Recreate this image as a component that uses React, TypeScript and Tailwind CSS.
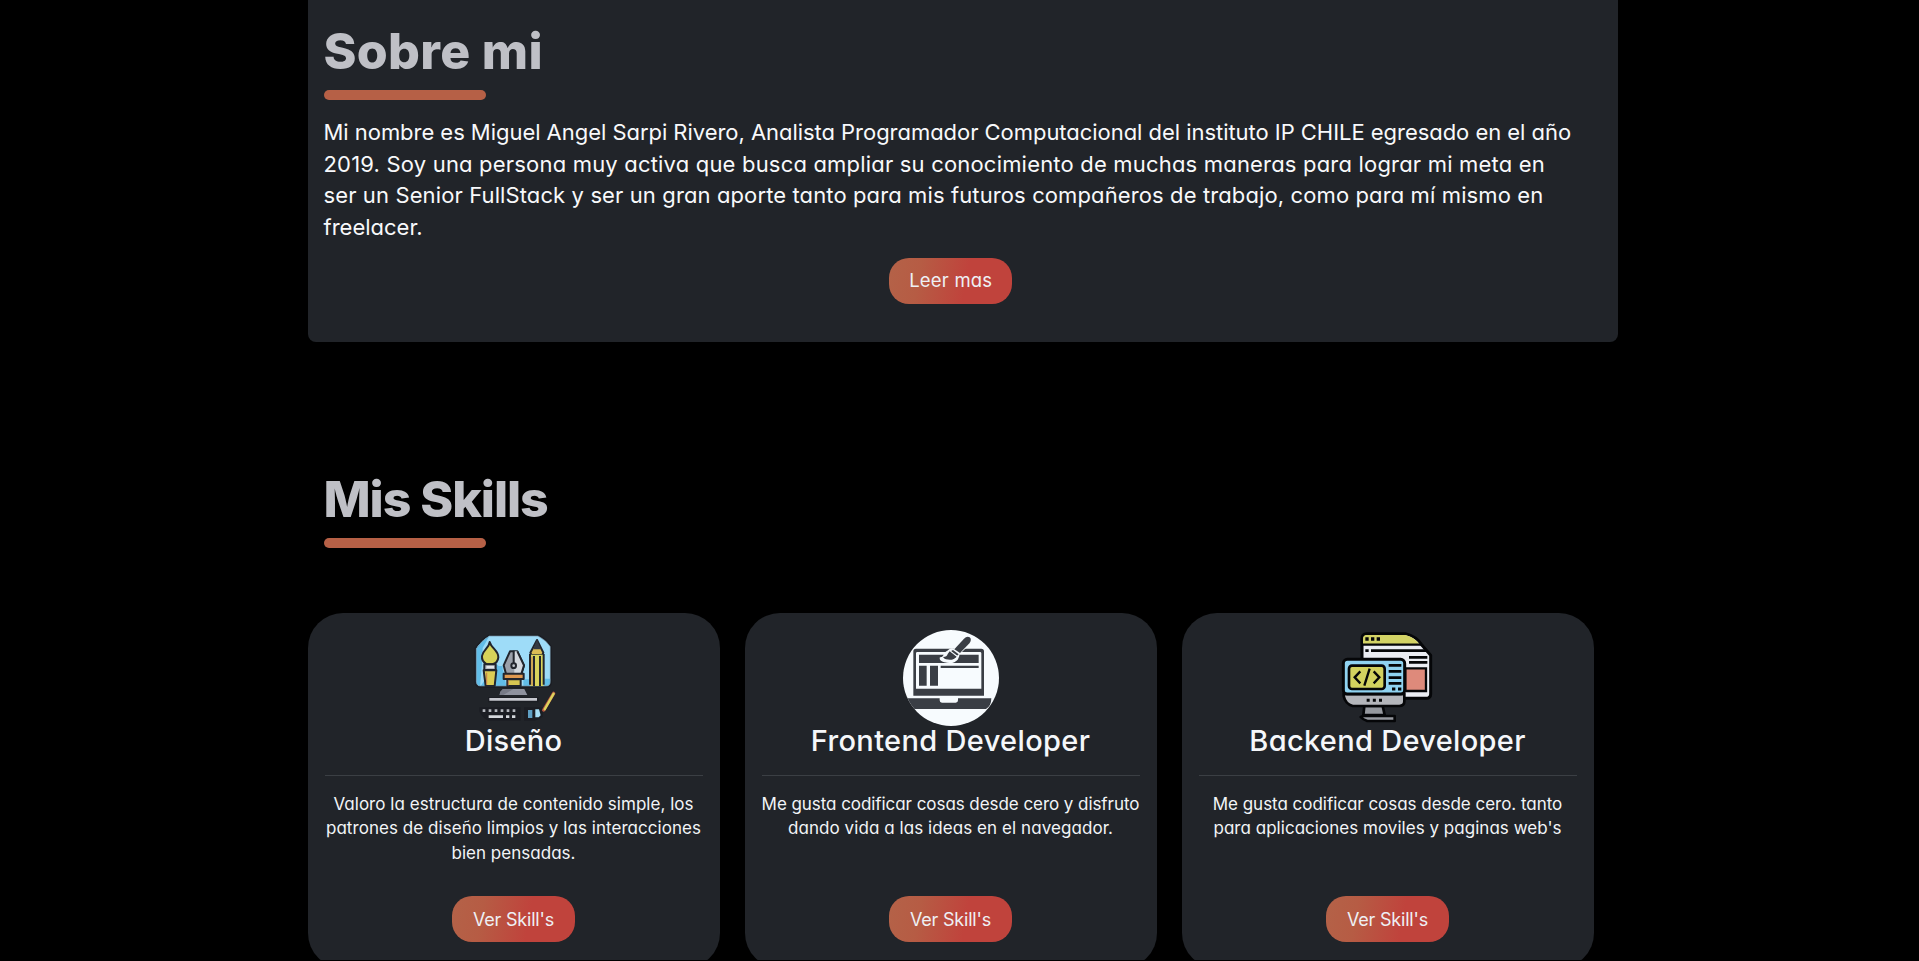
import type { ReactNode } from "react";

type Line = { text: string; tracking: string };

function Lines({ lines }: { lines: Line[] }) {
  return (
    <>
      {lines.map((l) => (
        <span key={l.text} className={`block whitespace-nowrap ${l.tracking}`}>
          {l.text}
        </span>
      ))}
    </>
  );
}

function Title({ text, tracking }: { text: string; tracking: string }) {
  return (
    <div>
      <h2 className={`text-[50px] leading-[60px] font-extrabold text-[#bfc0c6] ${tracking}`}>{text}</h2>
      <div className="mt-[9px] h-[10px] w-[162px] rounded-[5px] bg-[#b66046]" />
    </div>
  );
}

function Pill({ label, tracking }: { label: string; tracking: string }) {
  return (
    <button
      className={`h-[46px] w-[123px] rounded-[20px] bg-linear-[100deg,#b46248_0%,#b65c44_25%,#c0433c_62%,#c0433c_100%] whitespace-nowrap text-[#eef0f4] ${tracking}`}
    >
      {label}
    </button>
  );
}

function DesignIcon() {
  return (
    <svg viewBox="18 30 288 288" className="size-24">
      <defs>
        <clipPath id="design-screen">
          <path d="M88 48H234Q258 60 271 80V184Q271 198 258 198H62Q49 198 49 184V86Q64 62 88 48Z" />
        </clipPath>
      </defs>
      <path d="M86 44H238Q262 56 276 80V186Q276 203 258 203H60Q44 203 44 186V84Q60 58 86 44Z" fill="#1b1d23" />
      <g clipPath="url(#design-screen)">
        <rect x="45" y="44" width="230" height="158" fill="#9edcf8" />
        <path d="M45 44H96L50 90L68 150L112 134L130 152L140 202H45Z" fill="#62bde8" />
        <path d="M88 48L128 48L112 80L118 110L60 202H45V84Z" fill="#9edcf8" />
        <path d="M45 84L88 48L68 84L66 130L60 202H45Z" fill="#62bde8" />
        <path d="M112 138H128V202H100ZM190 178H212V202H190ZM254 176H275V202H250Z" fill="#62bde8" />
      </g>
      <path
        d="M88 48H234Q258 60 271 80V184Q271 198 258 198H62Q49 198 49 184V86Q64 62 88 48Z"
        fill="none"
        stroke="#6f8c9e"
        strokeWidth="2"
      />
      <g stroke="#22252d" strokeWidth="6" strokeLinejoin="round">
        <path d="M89 66C93 84 116 92 115 112C114 124 104 131 97 133H80C70 127 65 118 66 108C68 90 87 86 89 66Z" fill="#d6d35a" />
        <path d="M73 133H107V150H73Z" fill="#b9bdc4" />
        <path d="M71 151H109L104 198H77Z" fill="#dccc55" />
        <path d="M150 94H172L192 136L184 162H138L131 136Z" fill="#9ba0aa" />
        <path d="M163 94H172L192 136L184 162H163Z" fill="#d3d7dd" stroke="none" />
        <path d="M172 94L192 136L184 162" fill="none" />
        <path d="M131 161H191V177H131Z" fill="#df9850" />
        <path d="M142 178H182V198H142Z" fill="#d7c652" />
        <path d="M231 60L250 98L247 105H214L211 98Z" fill="#dcbc55" />
        <path d="M211 104H250V198H211Z" fill="#d9d45c" stroke="none" />
        <path d="M210 102V194M222 108V198M240 108V198M251 102V194" fill="none" />
      </g>
      <path d="M231 58L242 88H220Z" fill="#353942" />
      <path d="M80 158V194M216 110V196M145 181V196" stroke="#c47b4b" strokeWidth="3" />
      <path d="M161 92V130" stroke="#22252d" strokeWidth="6" />
      <circle cx="161" cy="137" r="7" fill="#c0c4cb" stroke="#22252d" strokeWidth="6" />
      <path d="M80 141H102" stroke="#eceef2" strokeWidth="5" />
      <path d="M129 207H193L202 225H119Q120 213 129 207Z" fill="#8f929e" />
      <path d="M129 207H160L130 225H119Q120 213 129 207Z" fill="#777a86" />
      <path d="M84 231H236V247H84ZM58 262H182V302H84Q66 292 58 274ZM192 262H248V290Q236 300 224 302H192Z" fill="#1b1d23" />
      <path d="M88 238H231" stroke="#c6c7ce" strokeWidth="8" />
      <path d="M68 272H166" stroke="#b4b7bd" strokeWidth="8" strokeDasharray="8 10" />
      <path d="M86 290H129M138 290H148M156 290H166" stroke="#d4d7dc" strokeWidth="8" />
      <path d="M204 270H217V294H204Z" fill="#5e9fc4" />
      <path d="M226 268H237L242 286L236 292H226Z" fill="#a7def6" />
      <path d="M251 270L281 220" stroke="#b4553f" strokeWidth="10" strokeLinecap="round" />
      <path d="M254 268L281 221" stroke="#dcd45c" strokeWidth="7" strokeLinecap="round" />
    </svg>
  );
}

function FrontendIcon() {
  return (
    <svg viewBox="39 30 288 288" className="size-24">
      <defs>
        <clipPath id="frontend-disc">
          <circle cx="183" cy="174" r="144" />
        </clipPath>
      </defs>
      <circle cx="183" cy="174" r="144" fill="#f7fbfe" />
      <g clipPath="url(#frontend-disc)" fill="#3a3e45">
        <path fillRule="evenodd" d="M78 86H274Q282 86 282 94V227H70V94Q70 86 78 86ZM82 96Q78 96 78 100V206H274V100Q274 96 270 96Z" />
        <path d="M87 104H266V129H87Z" />
        <path d="M87 137H110V197H87ZM120 137H144V197H120Z" />
        <path d="M152 137H266V144H152Z" />
        <path d="M30 235H149V241Q149 248 156 248H197Q204 248 204 241V235H304Q304 258 288 267H30Z" />
        <path
          d="M164 100L175 92Q184 84 192 89L222 56Q236 46 243 57Q245 64 239 71L206 103Q208 109 202 117Q190 132 164 125Q150 120 151 114Q162 113 164 100Z"
          fill="#f7fbfe"
          stroke="#f7fbfe"
          strokeWidth="4"
        />
        <path d="M222 56Q231 47 239 52Q246 58 239 69L210 99L193 88Z" />
        <path d="M189 90L206 103L201 107L182 94Z" />
        <path d="M179 94L200 110Q190 123 168 118Q162 116 159 111Q171 111 173 102Z" />
      </g>
      <path d="M182 93L202 109" stroke="#f7fbfe" strokeWidth="2.5" />
    </svg>
  );
}

function BackendIcon() {
  return (
    <svg viewBox="30 30 288 288" className="size-24">
      <path
        d="M110 41H226Q262 50 276 76L302 106V222Q302 235 288 235H210V120H96V56Q96 41 110 41Z"
        fill="#ebedf3"
        stroke="#050608"
        strokeWidth="9"
        strokeLinejoin="round"
      />
      <path d="M99 72V56Q99 45 110 45H226Q250 50 268 72Z" fill="#d3d365" />
      <path d="M96 74H276" stroke="#050608" strokeWidth="7" />
      <path d="M106 57H152" stroke="#050608" strokeWidth="10" strokeDasharray="10 7" />
      <path d="M106 92H116M123 92H290M237 112H292M237 127H292" stroke="#050608" strokeWidth="8" />
      <path d="M226 145H288V213H226Z" fill="#de8a7b" stroke="#050608" strokeWidth="7" />
      <path d="M103 258H158L164 285H100Z" fill="#96999f" stroke="#050608" strokeWidth="8" />
      <path d="M100 288H194V303H112Q98 298 92 291Z" fill="#96999f" stroke="#050608" strokeWidth="8" strokeLinejoin="round" />
      <path d="M41 222H223V244Q223 258 208 258H68Q46 252 41 228Z" fill="#b4b6bb" stroke="#050608" strokeWidth="8" />
      <rect x="40" y="118" width="184" height="104" rx="12" fill="#8fd3f1" stroke="#050608" strokeWidth="9" />
      <path d="M176 136H214M176 154H214M176 173H214M176 190H214" stroke="#050608" strokeWidth="8" />
      <path d="M186 207H196M204 207H214" stroke="#050608" strokeWidth="9" />
      <rect x="57" y="137" width="107" height="70" rx="9" fill="#d2d25f" stroke="#050608" strokeWidth="8" />
      <path d="M91 154L74 172L91 190M131 154L148 172L131 190M119 146L103 197" fill="none" stroke="#050608" strokeWidth="7" />
      <path d="M110 241H156" stroke="#050608" strokeWidth="9" strokeDasharray="9 9.5" />
    </svg>
  );
}

type Skill = { icon: ReactNode; title: string; tracking: string; lines: Line[] };

const about: Line[] = [
  {
    text: "Mi nombre es Miguel Angel Sarpi Rivero, Analista Programador Computacional del instituto IP CHILE egresado en el año",
    tracking: "tracking-[-0.04px]",
  },
  {
    text: "2019. Soy una persona muy activa que busca ampliar su conocimiento de muchas maneras para lograr mi meta en",
    tracking: "tracking-[0.19px]",
  },
  {
    text: "ser un Senior FullStack y ser un gran aporte tanto para mis futuros compañeros de trabajo, como para mí mismo en",
    tracking: "tracking-[0.115px]",
  },
  { text: "freelacer.", tracking: "tracking-normal" },
];

const skills: Skill[] = [
  {
    icon: <DesignIcon />,
    title: "Diseño",
    tracking: "tracking-[0.25px]",
    lines: [
      { text: "Valoro la estructura de contenido simple, los", tracking: "tracking-[0.03px]" },
      { text: "patrones de diseño limpios y las interacciones", tracking: "tracking-[0.05px]" },
      { text: "bien pensadas.", tracking: "tracking-[0.02px]" },
    ],
  },
  {
    icon: <FrontendIcon />,
    title: "Frontend Developer",
    tracking: "tracking-[0.34px]",
    lines: [
      { text: "Me gusta codificar cosas desde cero y disfruto", tracking: "tracking-[-0.06px]" },
      { text: "dando vida a las ideas en el navegador.", tracking: "tracking-[0.07px]" },
    ],
  },
  {
    icon: <BackendIcon />,
    title: "Backend Developer",
    tracking: "tracking-[0.32px]",
    lines: [
      { text: "Me gusta codificar cosas desde cero. tanto", tracking: "tracking-[-0.03px]" },
      { text: "para aplicaciones moviles y paginas web's", tracking: "tracking-[0.03px]" },
    ],
  },
];

function SkillCard({ skill }: { skill: Skill }) {
  return (
    <article className="flex h-[355px] flex-col items-center rounded-[35px] bg-[#212429] px-[17px] pt-[17px] text-center">
      {skill.icon}
      <h3 className={`text-[29px] leading-[30px] font-medium whitespace-nowrap text-[#f5f7fa] ${skill.tracking}`}>
        {skill.title}
      </h3>
      <hr className="mt-[19px] w-full border-t border-[#3b3f44]" />
      <p className="mt-4 flex h-[104px] flex-col items-center text-[17px] leading-[24.3px] text-[#f2f4f7]">
        <Lines lines={skill.lines} />
      </p>
      <Pill label="Ver Skill's" tracking="text-[18px] tracking-[-0.2px]" />
    </article>
  );
}

export default function App() {
  return (
    <div className="h-[961px] overflow-hidden bg-black font-['Inter','Open_Sans',sans-serif] [font-feature-settings:'cv11']">
      <main className="ml-[307.5px] h-[960px] w-[1310.5px] overflow-hidden">
        <section className="h-[342px] rounded-b-[8px] bg-[#212429] pt-[21px] pr-10 pl-4">
          <Title text="Sobre mi" tracking="tracking-[0.3px]" />
          <p className="mt-[17px] text-[22px] leading-[31.7px] text-[#f8f9fb]">
            <Lines lines={about} />
          </p>
          <div className="mt-[14px] flex justify-center">
            <Pill label="Leer mas" tracking="text-[18.5px] tracking-[0.2px]" />
          </div>
        </section>
        <section className="pt-[127px]">
          <div className="pl-4">
            <Title text="Mis Skills" tracking="tracking-[-1.05px]" />
          </div>
          <div className="mt-[65px] grid w-[1286px] grid-cols-3 gap-[25px]">
            {skills.map((s) => (
              <SkillCard key={s.title} skill={s} />
            ))}
          </div>
        </section>
      </main>
    </div>
  );
}
